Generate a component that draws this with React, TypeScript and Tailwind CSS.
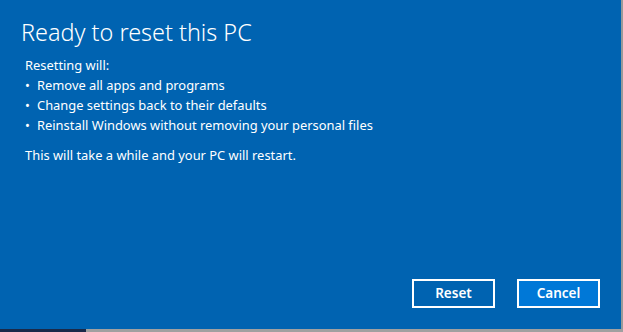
export default function App() {
  const items = [
    "Remove all apps and programs",
    "Change settings back to their defaults",
    "Reinstall Windows without removing your personal files",
  ];

  return (
    <div className="w-[623px] h-[332px] bg-[#8a8a8a] flex flex-col overflow-hidden" style={{ fontFamily: '"Noto Sans", "Open Sans", sans-serif' }}>
      <div className="flex">
        <div className="w-[621px] h-[329px] bg-[#0063b1] text-white flex flex-col px-[21px] pt-[16px] pb-[21px]">
          <h1 className="text-[23.4px] font-light leading-[32px]">Ready to reset this PC</h1>
          <div className="mt-[7px] pl-[4px] text-[12.9px] leading-[20px]">
            <p>Resetting will:</p>
            <ul>
              {items.map((item) => (
                <li key={item} className="flex">
                  <span className="w-[12px]">•</span>
                  <span>{item}</span>
                </li>
              ))}
            </ul>
            <p className="mt-[10px]">This will take a while and your PC will restart.</p>
          </div>
          <div className="mt-auto flex justify-end gap-[22px]">
            <button className="w-[83px] h-[29px] border-2 border-white text-[13.5px] font-semibold">Reset</button>
            <button className="w-[83px] h-[29px] border-2 border-white bg-[#0078d7] text-[13.5px] font-semibold">Cancel</button>
          </div>
        </div>
        <div className="w-[2px] bg-[#9a9a9a]" />
      </div>
      <div className="flex h-[3px]">
        <div className="w-[86px] bg-[#1a2a4a]" />
        <div className="flex-1 bg-[#a0a0a0]" />
      </div>
    </div>
  );
}
